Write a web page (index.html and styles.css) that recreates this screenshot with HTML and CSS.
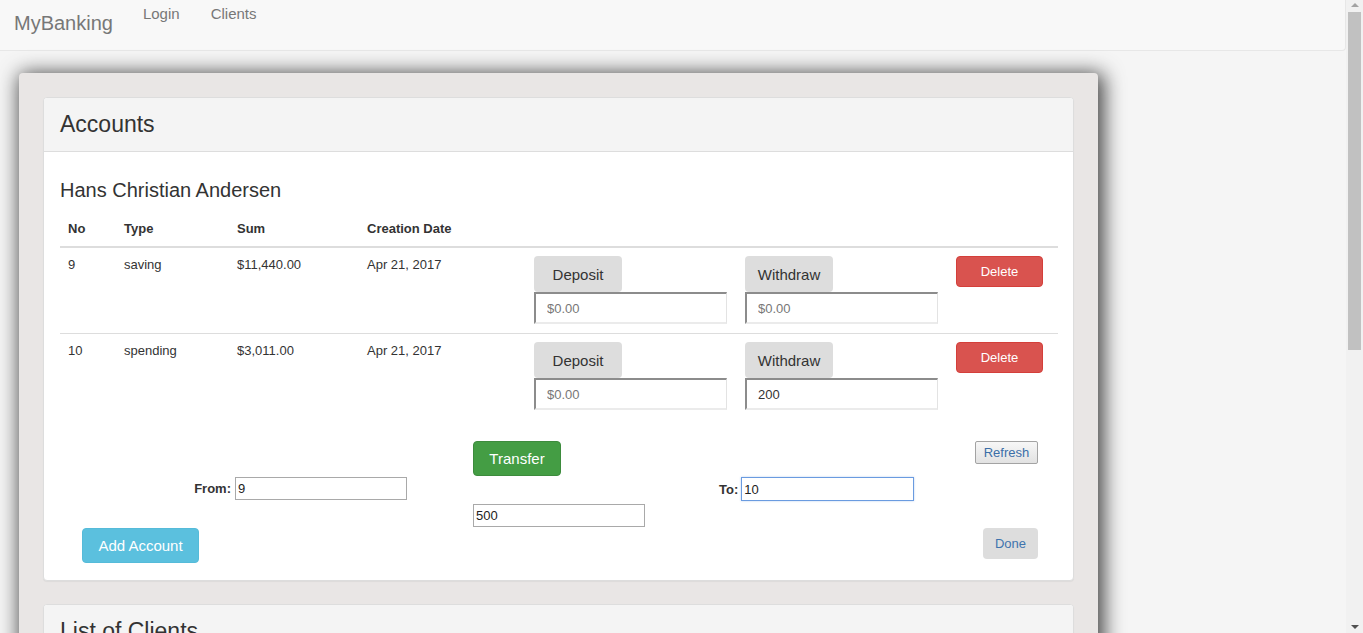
FILE: index.html
```html
<!DOCTYPE html>
<html lang="en">
<head>
<meta charset="utf-8">
<title>MyBanking</title>
<link rel="stylesheet" href="styles.css">
</head>
<body>
<div class="page">
  <div class="main">
    <nav class="navbar">
      <a class="brand">MyBanking</a>
      <a class="nav-link">Login</a>
      <a class="nav-link">Clients</a>
    </nav>
    <div class="container">
      <section class="panel">
        <div class="panel-heading">Accounts</div>
        <div class="panel-body">
          <h3 class="client-name">Hans Christian Andersen</h3>
          <table class="accounts">
            <colgroup>
              <col class="c-no"><col class="c-type"><col class="c-sum"><col class="c-date"><col class="c-dep"><col class="c-wd"><col class="c-del">
            </colgroup>
            <thead>
              <tr><th>No</th><th>Type</th><th>Sum</th><th>Creation Date</th><th></th><th></th><th></th></tr>
            </thead>
            <tbody>
              <tr class="first">
                <td class="txt">9</td><td class="txt">saving</td><td class="txt">$11,440.00</td><td class="txt">Apr 21, 2017</td>
                <td><div class="op"><button class="btn-gray">Deposit</button><input class="amount" placeholder="$0.00"></div></td>
                <td><div class="op"><button class="btn-gray">Withdraw</button><input class="amount" placeholder="$0.00"></div></td>
                <td><button class="btn-danger">Delete</button></td>
              </tr>
              <tr>
                <td class="txt">10</td><td class="txt">spending</td><td class="txt">$3,011.00</td><td class="txt">Apr 21, 2017</td>
                <td><div class="op"><button class="btn-gray">Deposit</button><input class="amount" placeholder="$0.00"></div></td>
                <td><div class="op"><button class="btn-gray">Withdraw</button><input class="amount" value="200"></div></td>
                <td><button class="btn-danger">Delete</button></td>
              </tr>
            </tbody>
          </table>
          <div class="transfer">
            <div class="t-transfer"><button class="btn-success">Transfer</button></div>
            <div class="t-refresh"><button class="btn-default">Refresh</button></div>
            <div class="t-from"><label class="lbl">From:</label><input class="plain" value="9"></div>
            <div class="t-to"><label class="lbl">To:</label><input class="plain focused" value="10"></div>
            <div class="t-amount"><input class="plain" value="500"></div>
            <div class="t-add"><button class="btn-info">Add Account</button></div>
            <div class="t-done"><button class="btn-done">Done</button></div>
          </div>
        </div>
      </section>
      <section class="panel">
        <div class="panel-heading">List of Clients</div>
        <div class="panel-body tall"></div>
      </section>
    </div>
  </div>
  <div class="scrollbar">
    <div class="sb-arrow up"></div>
    <div class="sb-thumb"></div>
    <div class="sb-track"></div>
    <div class="sb-arrow down"></div>
  </div>
</div>
</body>
</html>
```

FILE: styles.css
```css
* { box-sizing: border-box; }
html, body { margin: 0; padding: 0; }
body {
  background: #f5f5f5;
  font-family: "Liberation Sans", Arial, sans-serif;
  color: #333;
  height: 633px;
  overflow: hidden;
}
.page { display: flex; height: 633px; }
.main { flex: 1; height: 633px; overflow: hidden; }

.navbar {
  display: flex;
  align-items: flex-start;
  height: 51px;
  background: #f8f8f8;
  border-bottom: 1px solid #e7e7e7;
  border-right: 1px solid #e7e7e7;
  border-bottom-right-radius: 4px;
}
.brand {
  font-size: 20px;
  line-height: 20px;
  color: #777;
  padding: 13px 15px 0 14px;
}
.nav-link {
  font-size: 15px;
  line-height: 20px;
  color: #777;
  padding: 4px 15px 0 15px;
}
.nav-link + .nav-link { padding-left: 16px; }

.container {
  width: 1079px;
  margin: 22px 0 0 19px;
  padding: 24px;
  background: #e9e6e5;
  border-radius: 4px;
  box-shadow: 3px 3px 20px 3px rgba(0, 0, 0, 0.72);
}

.panel {
  background: #fff;
  border: 1px solid #ddd;
  border-radius: 4px;
  box-shadow: 0 1px 1px rgba(0, 0, 0, 0.05);
  margin-bottom: 23px;
}
.panel-heading {
  background: #f4f4f4;
  border-bottom: 1px solid #ddd;
  border-radius: 3px 3px 0 0;
  padding: 13px 16px 14px;
  font-size: 23px;
  line-height: 26px;
  color: #333;
}
.panel-body { padding: 15px 15px 17px 16px; }
.panel-body.tall { height: 200px; }

.client-name {
  margin: 12px 0 10px;
  font-size: 20px;
  line-height: 22px;
  font-weight: normal;
  color: #333;
}

.accounts {
  width: 100%;
  table-layout: fixed;
  border-collapse: collapse;
  font-size: 13px;
  color: #333;
  margin-bottom: 23px;
}
.c-no { width: 56px; }
.c-type { width: 113px; }
.c-sum { width: 130px; }
.c-date { width: 167px; }
.c-dep { width: 211px; }
.c-wd { width: 211px; }
.c-del { width: 110px; }
.accounts th {
  text-align: left;
  padding: 8px;
  line-height: 19px;
  font-weight: bold;
  border-bottom: 2px solid #ddd;
}
.accounts td {
  padding: 8px;
  line-height: 19px;
  vertical-align: top;
  border-top: 1px solid #ddd;
}
.accounts tr.first td { padding-bottom: 9px; }
.accounts td.txt { padding-top: 7px; }
.op { display: flex; flex-direction: column; align-items: flex-start; }

button { font-family: "Liberation Sans", Arial, sans-serif; cursor: pointer; }
.btn-gray {
  width: 88px;
  height: 36px;
  border: none;
  border-radius: 4px;
  background: #ddd;
  color: #333;
  font-size: 15px;
  padding: 0;
}
.amount {
  width: 193px;
  height: 32px;
  border-style: solid;
  border-width: 2px 1px 2px 2px;
  border-color: #8c8c8c #e3e3e3 #ebebeb #8c8c8c;
  padding: 0 0 0 11px;
  font-family: "Liberation Sans", Arial, sans-serif;
  font-size: 13px;
  color: #333;
  background: #fff;
}
.amount::placeholder { color: #777; }
.btn-danger {
  width: 87px;
  height: 31px;
  border: 1px solid #d43f3a;
  border-radius: 4px;
  background: #d9534f;
  color: #fff;
  font-size: 13px;
  padding: 0;
}

.transfer {
  display: grid;
  grid-template-columns: 413px 246px 339px;
  grid-template-rows: 36px 27px 24px 35px;
  font-size: 13px;
}
.t-transfer { grid-column: 2; grid-row: 1; }
.t-refresh { grid-column: 3; grid-row: 1; justify-self: end; margin-right: 20px; }
.t-from {
  grid-column: 1; grid-row: 2;
  display: flex; justify-content: flex-end; align-items: center;
  padding-right: 66px; height: 23px; gap: 4px;
}
.t-to {
  grid-column: 3; grid-row: 2;
  display: flex; align-items: center; height: 24px; gap: 3px;
}
.t-amount { grid-column: 2; grid-row: 3; }
.t-add { grid-column: 1; grid-row: 4; padding-left: 22px; }
.t-done { grid-column: 3; grid-row: 4; justify-self: end; margin-right: 20px; }

.lbl { font-weight: bold; font-size: 13px; color: #333; }
.plain {
  width: 172px;
  height: 23px;
  border: 1px solid #a9a9a9;
  padding: 0 2px;
  font-family: "Liberation Sans", Arial, sans-serif;
  font-size: 13px;
  color: #222;
  background: #fff;
}
.plain.focused {
  width: 173px;
  height: 24px;
  border: 1px solid #6a9be0;
  box-shadow: 0 0 2px rgba(90, 140, 220, 0.4);
}

.btn-success {
  width: 88px;
  height: 35px;
  border: 1px solid #3d8b3d;
  border-radius: 4px;
  background: #449d44;
  color: #fff;
  font-size: 15px;
  padding: 0;
}
.btn-info {
  width: 117px;
  height: 35px;
  border: 1px solid #55bbd9;
  border-radius: 4px;
  background: #5bc0de;
  color: #fff;
  font-size: 15px;
  padding: 0;
}
.btn-default {
  width: 63px;
  height: 23px;
  border: 1px solid #a3a3a3;
  border-radius: 2px;
  background: linear-gradient(#f7f7f7, #e2e2e2);
  color: #3b6ea8;
  font-size: 13px;
  padding: 0;
}
.btn-done {
  width: 55px;
  height: 31px;
  border: none;
  border-radius: 4px;
  background: #ddd;
  color: #3f74ae;
  font-size: 13px;
  padding: 0;
}

.scrollbar {
  width: 17px;
  height: 633px;
  background: #f1f1f1;
  display: flex;
  flex-direction: column;
  align-items: center;
}
.sb-arrow { width: 17px; height: 12px; position: relative; }
.sb-arrow::after {
  content: "";
  position: absolute;
  left: 5px;
  width: 0; height: 0;
  border-left: 4px solid transparent;
  border-right: 4px solid transparent;
}
.sb-arrow.up::after { top: 3px; border-bottom: 4px solid #a3a3a3; }
.sb-arrow.down::after { top: 4px; border-top: 4px solid #505050; }
.sb-thumb { width: 13px; height: 338px; background: #c1c1c1; }
.sb-track { flex: 1; }
```
